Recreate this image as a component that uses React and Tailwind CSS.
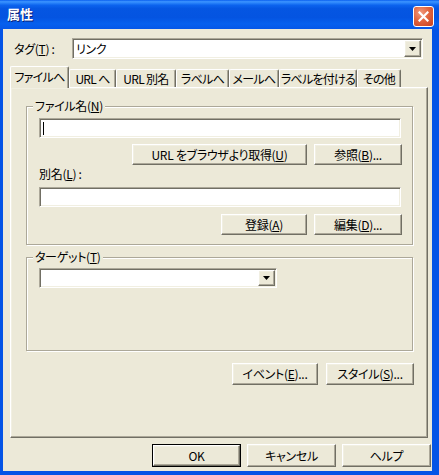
import React from "react";

const raised =
  "bg-[#ECE9D8] border border-t-white border-l-white border-r-[#716F64] border-b-[#716F64] shadow-[inset_-1px_-1px_0_#ACA899,inset_1px_1px_0_#F1EFE2]";
const sunken =
  "bg-white border border-t-[#ACA899] border-l-[#ACA899] border-r-white border-b-white shadow-[inset_1px_1px_0_#716F64,inset_-1px_-1px_0_#F1EFE2]";

function Btn({ w, children, isDefault }) {
  const inner = (
    <div className={`${raised} h-full w-full flex items-center justify-center leading-none whitespace-nowrap`}>
      {children}
    </div>
  );
  if (isDefault) {
    return (
      <div className={`${w} h-[23px] border border-black`}>
        {inner}
      </div>
    );
  }
  return <div className={`${w} h-[23px]`}>{inner}</div>;
}

function SmallBtn({ w, children }) {
  return (
    <div className={`${w} h-[21px] ${raised} flex items-center justify-center leading-none whitespace-nowrap`}>
      {children}
    </div>
  );
}

function ArrowBtn() {
  return (
    <div className={`w-[17px] h-full ${raised} flex items-center justify-center`}>
      <svg width="7" height="4" viewBox="0 0 7 4">
        <path d="M0 0H7L3.5 4Z" fill="#000" />
      </svg>
    </div>
  );
}

function Combo({ w, h, value }) {
  return (
    <div className={`${w} ${h} ${sunken} p-[1px] flex items-stretch`}>
      <div className="flex-1 flex items-center pl-[2px] leading-none">{value}</div>
      <ArrowBtn />
    </div>
  );
}

function Group({ label, h, children }) {
  return (
    <div
      className={`relative w-[387px] ${h} border border-[#ACA899] shadow-[inset_1px_1px_0_#fff,1px_1px_0_#fff]`}
    >
      <span className="absolute -top-[8px] left-[6px] px-[2px] bg-[#ECE9D8] leading-[14px] whitespace-nowrap">
        {label}
      </span>
      {children}
    </div>
  );
}

function Tab({ w, active, children }) {
  if (active) {
    return (
      <div
        className={`${w} h-[22px] -mb-[1px] relative z-10 bg-[#ECE9D8] border-l border-t border-r border-l-white border-t-white border-r-[#716F64] shadow-[inset_-1px_0_0_#ACA899] rounded-t-[2px] flex items-center justify-center pb-[2px] leading-none whitespace-nowrap tracking-[-0.7px]`}
      >
        {children}
      </div>
    );
  }
  return (
    <div
      className={`${w} h-[18px] bg-[#ECE9D8] border-l border-t border-r border-l-white border-t-white border-r-[#716F64] shadow-[inset_-1px_0_0_#ACA899] rounded-t-[2px] flex items-center justify-center leading-none whitespace-nowrap tracking-[-0.7px]`}
    >
      {children}
    </div>
  );
}

export default function App() {
  return (
    <div className="w-[439px] h-[475px] flex flex-col bg-[#0454E6] font-['Noto_Sans_CJK_JP',sans-serif] [font-feature-settings:'palt'] text-[12px] tracking-[-0.3px] text-black select-none">
      {/* title bar */}
      <div className="h-[29px] shrink-0 flex items-start pl-[7px] pr-[5px] bg-[linear-gradient(to_bottom,#0A5FEF_0%,#3D95FF_6%,#2A84FA_10%,#0C63EE_18%,#0556E2_30%,#0454E1_60%,#0660EE_82%,#0557E8_100%)]">
        <span className="mt-[7px] text-white font-bold text-[13px] leading-none tracking-normal [text-shadow:1px_1px_0_#0A1E73]">
          属性
        </span>
        <div className="ml-auto mt-[6px] w-[21px] h-[21px] rounded-[3px] border border-white bg-[radial-gradient(circle_at_35%_30%,#F19A7E_0%,#E2653F_45%,#C8401E_100%)] flex items-center justify-center">
          <svg width="11" height="11" viewBox="0 0 11 11">
            <path d="M1.5 1.5L9.5 9.5M9.5 1.5L1.5 9.5" stroke="#fff" strokeWidth="2.2" strokeLinecap="square" />
          </svg>
        </div>
      </div>

      {/* client area */}
      <div className="flex-1 ml-[3px] mr-[7px] mb-[4px] bg-[#ECE9D8] flex flex-col pt-[9px]">
        {/* tag row */}
        <div className="flex items-center h-[21px] pl-[11px]">
          <div className="w-[58px] leading-none whitespace-nowrap">
            タグ(<u>T</u>) :
          </div>
          <Combo w="w-[351px]" h="h-[21px]" value="リンク" />
        </div>

        {/* tabs */}
        <div className="mt-[6px] flex items-end h-[22px] pl-[7px]">
          <Tab w="w-[59px]" active>ファイルへ</Tab>
          <Tab w="w-[47px]">URL へ</Tab>
          <Tab w="w-[60px]">URL 別名</Tab>
          <Tab w="w-[53px]">ラベルへ</Tab>
          <Tab w="w-[50px]">メールへ</Tab>
          <Tab w="w-[78px]">ラベルを付ける</Tab>
          <Tab w="w-[44px]">その他</Tab>
        </div>

        {/* tab panel */}
        <div className={`ml-[7px] w-[418px] h-[351px] ${raised} pl-[15px] pt-[18px] flex flex-col`}>
          <Group label={<>ファイル名(<u>N</u>)</>} h="h-[139px]">
            <div className="pl-[12px] pt-[11px] w-[375px] flex flex-col">
              <div className={`w-[362px] h-[20px] ${sunken} flex items-center pl-[3px]`}>
                <div className="w-px h-[13px] bg-black" />
              </div>
              <div className="mt-[6px] flex justify-end gap-[7px]">
                <SmallBtn w="w-[175px]">
                  URL をブラウザより取得(<u>U</u>)
                </SmallBtn>
                <SmallBtn w="w-[88px]">
                  参照(<u>B</u>)...
                </SmallBtn>
              </div>
              <div className="mt-[2px] h-[14px] leading-[14px] whitespace-nowrap">
                別名(<u>L</u>) :
              </div>
              <div className={`mt-[6px] w-[362px] h-[20px] ${sunken}`} />
              <div className="mt-[7px] flex justify-end gap-[7px]">
                <SmallBtn w="w-[86px]">
                  登録(<u>A</u>)
                </SmallBtn>
                <SmallBtn w="w-[88px]">
                  編集(<u>D</u>)...
                </SmallBtn>
              </div>
            </div>
          </Group>

          <div className="mt-[12px]">
            <Group label={<>ターゲット(<u>T</u>)</>} h="h-[94px]">
              <div className="pl-[12px] pt-[10px]">
                <Combo w="w-[238px]" h="h-[20px]" value="" />
              </div>
            </Group>
          </div>

          <div className="mt-[12px] w-[388px] flex justify-end gap-[8px]">
            <SmallBtn w="w-[86px] h-[22px]">
              イベント(<u>E</u>)...
            </SmallBtn>
            <SmallBtn w="w-[88px] h-[22px]">
              スタイル(<u>S</u>)...
            </SmallBtn>
          </div>
        </div>

        {/* dialog buttons */}
        <div className="mt-[6px] flex justify-end gap-[6px] pr-[1px]">
          <Btn w="w-[89px]" isDefault>OK</Btn>
          <Btn w="w-[89px]">キャンセル</Btn>
          <Btn w="w-[89px]">ヘルプ</Btn>
        </div>
      </div>
    </div>
  );
}
